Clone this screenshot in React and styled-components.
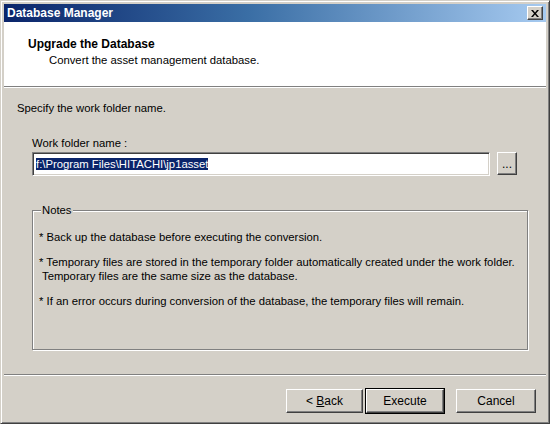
import React from 'react';
import styled, { createGlobalStyle } from 'styled-components';

const GlobalStyle = createGlobalStyle`
  html, body {
    margin: 0;
    padding: 0;
    background: #ffffff;
  }
  body {
    font-family: "Liberation Sans", Arial, sans-serif;
    font-size: 11px;
    color: #000;
  }
`;

const Window = styled.div`
  width: 550px;
  height: 424px;
  box-sizing: border-box;
  background: #d4d0c8;
  border: 1px solid;
  border-color: #d4d0c8 #404040 #404040 #d4d0c8;
  box-shadow: inset 1px 1px #ffffff, inset -1px -1px #808080;
  padding: 3px;
  display: flex;
  flex-direction: column;
`;

const TitleBar = styled.div`
  height: 18px;
  flex: none;
  display: flex;
  align-items: center;
  justify-content: space-between;
  padding: 0 3px 0 3px;
  background: linear-gradient(90deg, #0a246a 0%, #3a6ea5 45%, #a6caf0 100%);
  color: #ffffff;
  font-weight: bold;
  font-size: 12px;
`;

const CloseButton = styled.div`
  width: 16px;
  height: 14px;
  box-sizing: border-box;
  background: #d4d0c8;
  border: 1px solid;
  border-color: #ffffff #404040 #404040 #ffffff;
  box-shadow: inset -1px -1px #808080;
  display: flex;
  align-items: center;
  justify-content: center;
`;

const Header = styled.div`
  height: 65px;
  flex: none;
  background: #ffffff;
  padding: 15px 0 0 24px;
  box-sizing: border-box;
  border-bottom: 1px solid #808080;
  box-shadow: 0 1px #ffffff;
`;

const HeaderTitle = styled.div`
  font-weight: bold;
  font-size: 12px;
  line-height: 14px;
`;

const HeaderSub = styled.div`
  margin: 3px 0 0 21px;
  line-height: 13px;
  font-size: 11.3px;
`;

const Body = styled.div`
  flex: 1;
  display: flex;
  flex-direction: column;
  padding: 15px 0 0 0;
  font-size: 11.3px;
`;

const Content = styled.div`
  padding: 0 14px 0 13px;
`;

const Instruction = styled.div`
  line-height: 13px;
`;

const Field = styled.div`
  margin: 22px 0 0 15px;
`;

const Label = styled.div`
  line-height: 13px;
`;

const InputRow = styled.div`
  display: flex;
  align-items: flex-start;
  gap: 7px;
  margin-top: 2px;
`;

const TextBox = styled.div`
  width: 458px;
  height: 24px;
  box-sizing: border-box;
  background: #ffffff;
  border: 1px solid;
  border-color: #808080 #ffffff #ffffff #808080;
  box-shadow: inset 1px 1px #404040, inset -1px -1px #d4d0c8;
  padding: 4px 3px 0 3px;
  line-height: 14px;
  white-space: nowrap;
`;

const Selected = styled.span`
  background: #0a246a;
  color: #ffffff;
`;

const Button = styled.div`
  width: ${p => p.$w}px;
  height: ${p => p.$h || 24}px;
  box-sizing: border-box;
  background: #d4d0c8;
  border: 1px solid;
  border-color: #ffffff #404040 #404040 #ffffff;
  box-shadow: ${p => (p.$default ? '0 0 0 1px #000000, inset -1px -1px #808080' : 'inset -1px -1px #808080, inset 1px 1px #d4d0c8')};
  display: flex;
  align-items: center;
  justify-content: center;
  font-size: 12px;
  line-height: 14px;
  white-space: pre;
`;

const GroupBox = styled.fieldset`
  margin: 28px 0 0 15px;
  width: 496px;
  height: 146px;
  box-sizing: border-box;
  padding: 13px 6px 0 6px;
  border: 1px solid #808080;
  box-shadow: inset 1px 1px #ffffff, 1px 1px #ffffff;
`;

const Legend = styled.legend`
  padding: 0 1px;
  margin-left: 2px;
  background: #d4d0c8;
  line-height: 13px;
`;

const Note = styled.div`
  line-height: 14px;
  margin-bottom: 11px;
`;

const NoteCont = styled.div`
  padding-left: 3px;
`;

const Separator = styled.div`
  margin-top: 24px;
  border-top: 1px solid #808080;
  border-bottom: 1px solid #ffffff;
`;

const ButtonRow = styled.div`
  display: flex;
  justify-content: flex-end;
  padding: 13px 10px 0 0;
`;

const ButtonGroup = styled.div`
  display: flex;
  gap: 3px;
  margin-right: 12px;
`;

const Underline = styled.span`
  text-decoration: underline;
`;

export default function App() {
  return (
    <>
      <GlobalStyle />
      <Window>
        <TitleBar>
          <span>Database Manager</span>
          <CloseButton>
            <svg width="8" height="7" viewBox="0 0 8 7">
              <path d="M0 0h2l2 2.5L6 0h2L5 3.5 8 7H6L4 4.5 2 7H0l3-3.5z" fill="#000" />
            </svg>
          </CloseButton>
        </TitleBar>
        <Header>
          <HeaderTitle>Upgrade the Database</HeaderTitle>
          <HeaderSub>Convert the asset management database.</HeaderSub>
        </Header>
        <Body>
          <Content>
            <Instruction>Specify the work folder name.</Instruction>
            <Field>
              <Label>Work folder name :</Label>
              <InputRow>
                <TextBox>
                  <Selected>f:\Program Files\HITACHI\jp1asset</Selected>
                </TextBox>
                <Button $w={20} $h={23}>...</Button>
              </InputRow>
            </Field>
            <GroupBox>
              <Legend>Notes</Legend>
              <Note>* Back up the database before executing the conversion.</Note>
              <Note>
                * Temporary files are stored in the temporary folder automatically created under the work folder.
                <NoteCont>Temporary files are the same size as the database.</NoteCont>
              </Note>
              <Note>* If an error occurs during conversion of the database, the temporary files will remain.</Note>
            </GroupBox>
          </Content>
          <Separator />
          <ButtonRow>
            <ButtonGroup>
              <Button $w={77}>
                <span>{'< '}<Underline>B</Underline>ack</span>
              </Button>
              <Button $w={78} $default>Execute</Button>
            </ButtonGroup>
            <Button $w={80}>Cancel</Button>
          </ButtonRow>
        </Body>
      </Window>
    </>
  );
}
